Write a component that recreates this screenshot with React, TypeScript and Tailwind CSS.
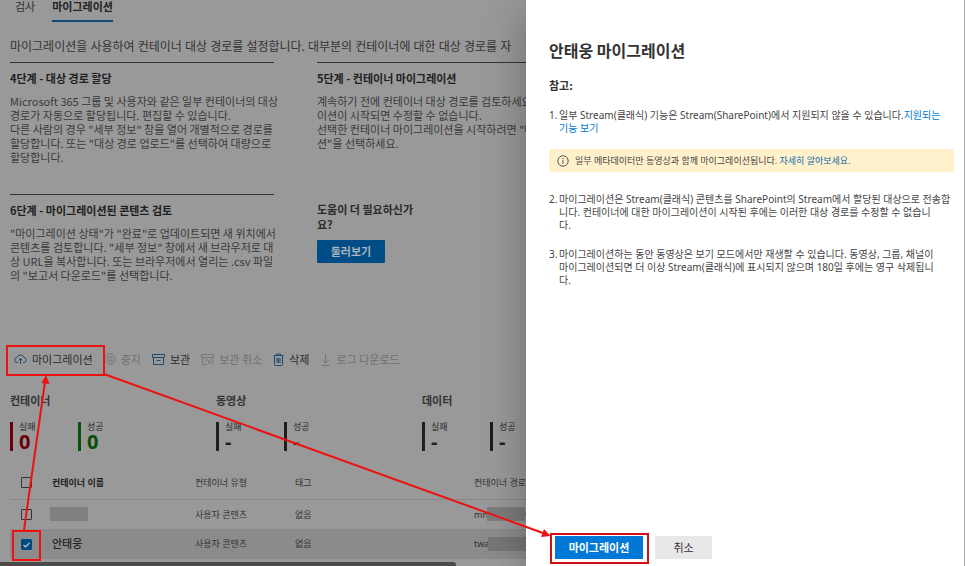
import type { ReactNode } from "react";

function Lines({ lines }: { lines: ReactNode[] }) {
  return (
    <>
      {lines.map((line, i) => (
        <span key={i} className="block whitespace-nowrap">
          {line}
        </span>
      ))}
    </>
  );
}

function Step({ title, lines }: { title: string; lines: string[] }) {
  return (
    <section className="h-[132px] border-t border-[#333] pt-[7px]">
      <h2 className="text-[11px] leading-4 font-bold text-[#1f1f1f]">{title}</h2>
      <p className="mt-2 text-[11px] leading-[14px] text-[#3a3a3a]">
        <Lines lines={lines} />
      </p>
    </section>
  );
}

function CloudIcon() {
  return (
    <svg width="13" height="12" viewBox="0 0 13 12" fill="none" stroke="#1f4a70" strokeWidth="1">
      <path d="M4 9.5H3a2.4 2.4 0 0 1-.2-4.8A3.8 3.8 0 0 1 10 4.4a2.6 2.6 0 0 1 .2 5.1H9" />
      <path d="M6.5 11V5.5M4.6 7.4l1.9-1.9 1.9 1.9" />
    </svg>
  );
}

function StopIcon() {
  return (
    <svg width="12" height="12" viewBox="0 0 12 12" fill="none" stroke="#777" strokeWidth="1">
      <circle cx="6" cy="6" r="5.2" />
      <rect x="4" y="4" width="4" height="4" />
    </svg>
  );
}

function ArchiveIcon() {
  return (
    <svg width="13" height="12" viewBox="0 0 13 12" fill="none" stroke="#1f4a70" strokeWidth="1">
      <path d="M.5 1.500h12v3H.5zM1.500 4.500v7h10v-7M4.500 7.500h4" />
    </svg>
  );
}

function UnarchiveIcon() {
  return (
    <svg width="13" height="12" viewBox="0 0 13 12" fill="none" stroke="#777" strokeWidth="1">
      <path d="M6 11.500H1.500v-7M.5 1.500h12v3H.5zM11.500 4.500v2M4 7h3" />
      <path d="M7.500 7.500v2.500H10M7.500 10l2-2a1.600 1.600 0 0 1 2.300 2.300L10.500 11.500" />
    </svg>
  );
}

function TrashIcon() {
  return (
    <svg width="11" height="13" viewBox="0 0 11 13" fill="none" stroke="#1f4a70" strokeWidth="1">
      <path d="M.5 2.500h10M3.500 2.500v-1.500h4v1.500M1.500 2.500v9a1 1 0 0 0 1 1h6a1 1 0 0 0 1-1v-9" />
      <path d="M4 5v5M5.500 5v5M7 5v5" />
    </svg>
  );
}

function DownloadIcon() {
  return (
    <svg width="11" height="13" viewBox="0 0 11 13" fill="none" stroke="#777" strokeWidth="1">
      <path d="M5.500 1v9M2 6.700l3.500 3.300 3.500-3.300M2 12.500h7" />
    </svg>
  );
}

function Tool({ icon, label, disabled }: { icon: ReactNode; label: string; disabled?: boolean }) {
  return (
    <button
      type="button"
      disabled={disabled}
      className={
        disabled
          ? "flex items-center gap-[5px] whitespace-nowrap text-[#707070]"
          : "flex items-center gap-[5px] whitespace-nowrap text-[#2b2b2b]"
      }
    >
      {icon}
      {label}
    </button>
  );
}

function Stat({ label, value, bar, text }: { label: string; value: string; bar: string; text: string }) {
  return (
    <div className={`h-[29px] w-[68px] shrink-0 border-l-[3px] pl-[6px] font-['Noto_Sans','Noto_Sans_CJK_KR',sans-serif] ${bar}`}>
      <div className="text-[9px] leading-[10px] text-[#2b2b2b]">{label}</div>
      <div className={`text-[20px] leading-[19px] font-bold ${text}`}>{value}</div>
    </div>
  );
}

function StatGroup({ title, children }: { title: string; children: ReactNode }) {
  return (
    <div className="w-[206px] shrink-0">
      <h3 className="mb-[14px] text-[11px] leading-4 font-bold text-[#333]">{title}</h3>
      <div className="flex">{children}</div>
    </div>
  );
}

function Tick({ checked, label }: { checked?: boolean; label: string }) {
  return (
    <label className="relative ml-[11px] block size-[11px]">
      <input
        type="checkbox"
        defaultChecked={checked}
        aria-label={label}
        className="peer block size-[11px] appearance-none rounded-[1px] border border-[#333] checked:border-[#004a80] checked:bg-[#004a80]"
      />
      <svg
        viewBox="0 0 11 11"
        className="pointer-events-none absolute inset-0 hidden peer-checked:block"
        fill="none"
        stroke="#ccc"
        strokeWidth="1.2"
      >
        <path d="M2.5 5.8l2 2 4-4" />
      </svg>
    </label>
  );
}

const cell = "p-0 text-left whitespace-nowrap";

function MainPage() {
  return (
    <main className="relative min-w-0 flex-1 overflow-hidden bg-[#999] text-[#333]">
      <div className="pl-[10px]">
        <nav className="flex h-[22px] gap-[17px] pl-[5px] text-[11px]">
          <button type="button" className="h-[22px] pb-[10px] leading-3">
            검사
          </button>
          <button type="button" className="h-[22px] border-b-2 border-[#104a78] pb-2 leading-3 font-bold text-[#222]">
            마이그레이션
          </button>
        </nav>

        <p className="mt-4 mb-[7px] font-['Noto_Sans','Noto_Sans_CJK_KR',sans-serif] text-[12px] leading-[17px] whitespace-nowrap">
          마이그레이션을 사용하여 컨테이너 대상 경로를 설정합니다. 대부분의 컨테이너에 대한 대상 경로를 자
        </p>

        <div className="grid grid-cols-[264px_1fr] gap-x-[43px]">
          <Step
            title="4단계 - 대상 경로 할당"
            lines={[
              "Microsoft 365 그룹 및 사용자와 같은 일부 컨테이너의 대상",
              "경로가 자동으로 할당됩니다. 편집할 수 있습니다.",
              "다른 사람의 경우 \"세부 정보\" 창을 열어 개별적으로 경로를",
              "할당합니다. 또는 \"대상 경로 업로드\"를 선택하여 대량으로",
              "할당합니다.",
            ]}
          />
          <Step
            title="5단계 - 컨테이너 마이그레이션"
            lines={[
              "계속하기 전에 컨테이너 대상 경로를 검토하세요",
              "이션이 시작되면 수정할 수 없습니다.",
              "선택한 컨테이너 마이그레이션을 시작하려면 \"마",
              "션\"을 선택하세요.",
            ]}
          />
          <Step
            title="6단계 - 마이그레이션된 콘텐츠 검토"
            lines={[
              "\"마이그레이션 상태\"가 \"완료\"로 업데이트되면 새 위치에서",
              "콘텐츠를 검토합니다. \"세부 정보\" 창에서 새 브라우저로 대",
              "상 URL을 복사합니다. 또는 브라우저에서 열리는 .csv 파일",
              "의 \"보고서 다운로드\"를 선택합니다.",
            ]}
          />
          <section className="pt-2">
            <h2 className="text-[11px] leading-[15px] font-bold text-[#2b2b2b]">
              <Lines lines={["도움이 더 필요하신가", "요?"]} />
            </h2>
            <button
              type="button"
              className="mt-2 h-[23px] w-[68px] rounded-[1px] bg-[#004c87] text-[11px] font-bold text-[#aab4bd]"
            >
              둘러보기
            </button>
          </section>
        </div>

        <div className="mt-[23px] flex h-5 items-center gap-[11px] pl-1 text-[11px]">
          <Tool icon={<CloudIcon />} label="마이그레이션" />
          <Tool icon={<StopIcon />} label="중지" disabled />
          <Tool icon={<ArchiveIcon />} label="보관" />
          <Tool icon={<UnarchiveIcon />} label="보관 취소" disabled />
          <Tool icon={<TrashIcon />} label="삭제" />
          <Tool icon={<DownloadIcon />} label="로그 다운로드" disabled />
        </div>

        <div className="mt-[23px] flex">
          <StatGroup title="컨테이너">
            <Stat label="실패" value="0" bar="border-[#6b0008]" text="text-[#6b0008]" />
            <Stat label="성공" value="0" bar="border-[#0a4f0a]" text="text-[#0a4f0a]" />
          </StatGroup>
          <StatGroup title="동영상">
            <Stat label="실패" value="-" bar="border-[#1f1f1f]" text="text-[#1f1f1f]" />
            <Stat label="성공" value="-" bar="border-[#1f1f1f]" text="text-[#1f1f1f]" />
          </StatGroup>
          <StatGroup title="데이터">
            <Stat label="실패" value="-" bar="border-[#1f1f1f]" text="text-[#1f1f1f]" />
            <Stat label="성공" value="-" bar="border-[#1f1f1f]" text="text-[#1f1f1f]" />
          </StatGroup>
        </div>

        <table className="mt-4 w-full table-fixed border-collapse font-['Noto_Sans','Noto_Sans_CJK_KR',sans-serif] text-[9px]">
          <colgroup>
            <col className="w-[42px]" />
            <col className="w-[143px]" />
            <col className="w-[100px]" />
            <col className="w-[179px]" />
            <col />
          </colgroup>
          <thead>
            <tr className="h-8 border-b border-[#888]">
              <th className={cell}>
                <Tick label="모두 선택" />
              </th>
              <th className={`${cell} font-bold text-[#222]`}>컨테이너 이름</th>
              <th className={`${cell} font-normal`}>컨테이너 유형</th>
              <th className={`${cell} font-normal`}>태그</th>
              <th className={`${cell} font-normal`}>컨테이너 경로</th>
            </tr>
          </thead>
          <tbody>
            <tr className="h-[30px]">
              <td className={cell}>
                <Tick label="컨테이너 선택" />
              </td>
              <td className={cell}>
                <div className="-ml-0.5 h-[14px] w-[38px] bg-[#808080]" />
              </td>
              <td className={cell}>사용자 콘텐츠</td>
              <td className={cell}>없음</td>
              <td className={cell}>
                <div className="flex items-center">
                  <span className="w-[13px] shrink-0">mni</span>
                  <span className="h-[14px] w-[38px] shrink-0 bg-[#7c7c7c]" />v
                </div>
              </td>
            </tr>
            <tr className="h-[30px] bg-[#8b8b8b]">
              <td className={cell}>
                <Tick label="안태웅 선택" checked />
              </td>
              <td className={`${cell} text-[11px] font-medium text-[#222]`}>안태웅</td>
              <td className={cell}>사용자 콘텐츠</td>
              <td className={cell}>없음</td>
              <td className={cell}>
                <div className="flex items-center">
                  <span className="w-[14px] shrink-0">twa</span>
                  <span className="h-[14px] w-[38px] shrink-0 bg-[#777]" />
                </div>
              </td>
            </tr>
          </tbody>
        </table>
      </div>
      <div className="mt-[3px] mr-[70px] h-[5px] rounded-tr-[3px] bg-[#4b4b4b]" />
    </main>
  );
}

function InfoIcon() {
  return (
    <svg width="12" height="12" viewBox="0 0 12 12" fill="none" stroke="#555" strokeWidth="1">
      <circle cx="6" cy="6" r="5.2" />
      <path d="M6 5.2v3.6M6 3v1.2" />
    </svg>
  );
}

function Panel() {
  return (
    <aside className="relative flex w-[439px] shrink-0 flex-col border-r border-[#aaa] bg-white pl-[23px] text-[#444] shadow-[0_10px_40px_rgba(0,0,0,0.3)]">
      <h1 className="mt-[39px] text-[16px] leading-[22px] font-bold text-[#333]">안태웅 마이그레이션</h1>
      <h2 className="mt-4 text-[11px] leading-4 font-bold text-[#333]">참고:</h2>

      <ol className="mt-4 font-['Noto_Sans','Noto_Sans_CJK_KR',sans-serif] text-[10px] leading-[13px]">
        <li className="flex">
          <span className="w-[10px] shrink-0">1.</span>
          <p>
            <Lines
              lines={[
                <>
                  일부 Stream(클래식) 기능은 Stream(SharePoint)에서 지원되지 않을 수 있습니다.
                  <a href="#features" className="text-[#0078d4]">
                    지원되는
                  </a>
                </>,
                <a href="#features" className="text-[#0078d4]">
                  기능 보기
                </a>,
              ]}
            />
          </p>
        </li>
        <li className="mt-[14px] mr-[10px] flex h-[23px] items-center gap-[6px] bg-[#fff1cc] pl-2 text-[9px] whitespace-nowrap">
          <InfoIcon />
          <span>
            일부 메타데이터만 동영상과 함께 마이그레이션됩니다.{" "}
            <a href="#metadata" className="text-[#0f6ba8]">
              자세히 알아보세요.
            </a>
          </span>
        </li>
        <li className="mt-[21px] flex">
          <span className="w-[10px] shrink-0">2.</span>
          <p>
            <Lines
              lines={[
                "마이그레이션은 Stream(클래식) 콘텐츠를 SharePoint의 Stream에서 할당된 대상으로 전송합",
                "니다. 컨테이너에 대한 마이그레이션이 시작된 후에는 이러한 대상 경로를 수정할 수 없습니",
                "다.",
              ]}
            />
          </p>
        </li>
        <li className="mt-4 flex">
          <span className="w-[10px] shrink-0">3.</span>
          <p>
            <Lines
              lines={[
                "마이그레이션하는 동안 동영상은 보기 모드에서만 재생할 수 있습니다. 동영상, 그룹, 채널이",
                "마이그레이션되면 더 이상 Stream(클래식)에 표시되지 않으며 180일 후에는 영구 삭제됩니",
                "다.",
              ]}
            />
          </p>
        </li>
      </ol>

      <div className="mt-auto mb-[7px] flex gap-3 pl-[6px] text-[11px]">
        <button type="button" className="h-[23px] w-[88px] bg-[#0078d7] font-bold text-white">
          마이그레이션
        </button>
        <button type="button" className="h-[23px] w-[57px] bg-[#e8e8e8] text-[#333]">
          취소
        </button>
      </div>
    </aside>
  );
}

function Callouts() {
  return (
    <svg
      width="965"
      height="566"
      viewBox="0 0 965 566"
      className="pointer-events-none absolute top-0 left-0"
      fill="none"
      stroke="#ee1111"
      strokeWidth="2"
    >
      <rect x="7" y="346" width="97" height="29" />
      <rect x="13" y="531" width="27" height="29" />
      <rect x="551" y="534" width="97" height="29" stroke="#d40f14" />
      <path d="M24 530L45 382M104 374L543 533" />
      <path d="M46 375l3.5 9-8-1zM550.5 536l-9.500 1 3-8z" fill="#ee1111" stroke="none" />
    </svg>
  );
}

export default function App() {
  return (
    <div className="relative flex h-screen overflow-hidden font-['Noto_Sans_CJK_KR','Noto_Sans',sans-serif]">
      <MainPage />
      <Panel />
      <Callouts />
    </div>
  );
}
